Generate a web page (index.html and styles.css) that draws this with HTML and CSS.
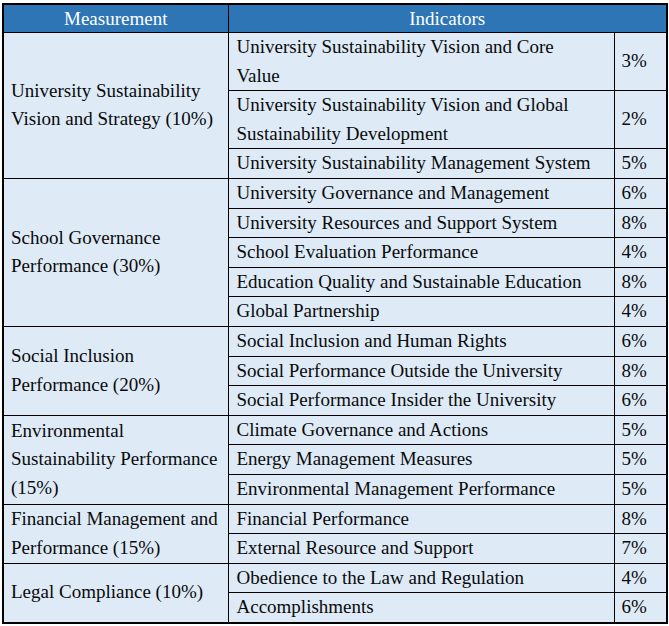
FILE: index.html
```html
<!DOCTYPE html>
<html>
<head>
<meta charset="utf-8">
<link rel="stylesheet" href="styles.css">
</head>
<body>
<div class="frame">
<table class="grid">
<colgroup><col class="c1"><col class="c2"><col class="c3"></colgroup>
<thead>
<tr><th>Measurement</th><th colspan="2">Indicators</th></tr>
</thead>
<tbody>
<tr><td class="m" rowspan="3">University Sustainability Vision and Strategy (10%)</td><td class="ind">University Sustainability Vision and Core Value</td><td class="p">3%</td></tr>
<tr><td class="ind">University Sustainability Vision and Global Sustainability Development</td><td class="p">2%</td></tr>
<tr><td class="ind">University Sustainability Management System</td><td class="p">5%</td></tr>
<tr><td class="m" rowspan="5">School Governance Performance (30%)</td><td class="ind">University Governance and Management</td><td class="p">6%</td></tr>
<tr><td class="ind">University Resources and Support System</td><td class="p">8%</td></tr>
<tr><td class="ind">School Evaluation Performance</td><td class="p">4%</td></tr>
<tr><td class="ind">Education Quality and Sustainable Education</td><td class="p">8%</td></tr>
<tr><td class="ind">Global Partnership</td><td class="p">4%</td></tr>
<tr><td class="m" rowspan="3">Social Inclusion Performance (20%)</td><td class="ind">Social Inclusion and Human Rights</td><td class="p">6%</td></tr>
<tr><td class="ind">Social Performance Outside the University</td><td class="p">8%</td></tr>
<tr><td class="ind">Social Performance Insider the University</td><td class="p">6%</td></tr>
<tr><td class="m" rowspan="3">Environmental Sustainability Performance (15%)</td><td class="ind">Climate Governance and Actions</td><td class="p">5%</td></tr>
<tr><td class="ind">Energy Management Measures</td><td class="p">5%</td></tr>
<tr><td class="ind">Environmental Management Performance</td><td class="p">5%</td></tr>
<tr><td class="m" rowspan="2">Financial Management and Performance (15%)</td><td class="ind">Financial Performance</td><td class="p">8%</td></tr>
<tr><td class="ind">External Resource and Support</td><td class="p">7%</td></tr>
<tr><td class="m" rowspan="2">Legal Compliance (10%)</td><td class="ind">Obedience to the Law and Regulation</td><td class="p">4%</td></tr>
<tr><td class="ind">Accomplishments</td><td class="p">6%</td></tr>
</tbody>
</table>
</div>
</body>
</html>
```
FILE: styles.css
```css
html, body {
  margin: 0;
  padding: 0;
  background: #ffffff;
}
body {
  padding: 3px 0 0 2px;
  font-family: "Liberation Serif", "Times New Roman", serif;
  font-size: 19px;
  line-height: 28.6px;
  color: #0a0a0a;
}
.frame {
  width: 662px;
  border: 2px solid #000000;
  background: #deebf7;
}
.grid {
  width: 100%;
  border-collapse: collapse;
  border-style: hidden;
  table-layout: fixed;
}
.c1 { width: 224px; }
.c3 { width: 51px; }
.grid th, .grid td {
  border: 1px solid #000000;
  padding: 0 7px;
  vertical-align: middle;
  text-align: left;
  font-weight: normal;
}
.grid th {
  background: #2e75b6;
  color: #ffffff;
  text-align: center;
  line-height: 27px;
}
.grid td.ind {
  padding-left: 8px;
  padding-right: 14px;
}
.grid td.p {
  padding-left: 6px;
  padding-right: 0;
}
```
